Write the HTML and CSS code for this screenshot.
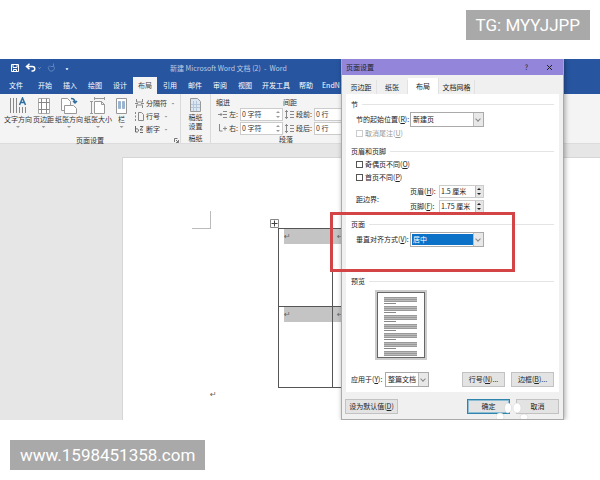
FILE: index.html
```
<!DOCTYPE html>
<html lang="zh-CN">
<head>
    <meta charset="utf-8">
    <title>页面设置</title>
    <link rel="stylesheet" href="styles.css">
</head>
<body>
<div class="top-bar"><span class="badge">TG: MYYJJPP</span></div>

<div class="app">
    <div class="title-bar">
        <svg class="quick" width="60" height="10" viewBox="0 0 60 10" fill="none" stroke="#fff">
            <path d="M1.5 1.5h7v7h-7z M3 1.5v3h4v-3 M3.5 8.500v-2h3v2"/>
            <path d="M17 3.500h5.500c3 0 3 4.500 0 4.500h-1 M19.500 0.800l-3 2.700 3 2.700" stroke-width="1.500"/>
            <path d="M28.500 4.500l1 1 1-1" stroke="#8aa6d2"/>
            <path d="M40 2.500a3 3 0 1 0 3.500 .5 M43.500 .500v3h-3" stroke="#5f83bd"/>
            <path d="M56 5.500l1 1.500 1-1.500z" stroke="#c6d4ea"/>
        </svg>
        <div class="doc-name">新建 Microsoft Word 文档 (2)&nbsp; -&nbsp; Word</div>
    </div>
    <nav class="menu">
        <a href="#" class="file">文件</a>
        <a href="#">开始</a>
        <a href="#">插入</a>
        <a href="#">绘图</a>
        <a href="#">设计</a>
        <a href="#" class="active">布局</a>
        <a href="#">引用</a>
        <a href="#">邮件</a>
        <a href="#">审阅</a>
        <a href="#">视图</a>
        <a href="#" class="tight">开发工具</a>
        <a href="#" class="tight">帮助</a>
        <a href="#" class="tight">EndN</a>
    </nav>

    <div class="ribbon">
        <div class="group setup">
            <div class="group-body">
                <button class="big">
                    <svg width="18" height="18" viewBox="0 0 18 18" fill="none" stroke="#888"><path d="M1.500 1v15M4.500 1v15M7.500 1v15M10.500 10v6M13.500 10v6M16.500 10v6"/><path d="M10.500 8l3-7 3 7M11.500 5.500h4" stroke="#2f6e9e" stroke-width="1.500"/></svg>
                    文字方向<i class="down"></i>
                </button>
                <button class="big">
                    <svg width="14" height="18" viewBox="0 0 14 18" fill="#fff" stroke="#aaa"><path d="M1.500 1.500h11v15h-11z"/><path d="M4.500 1.500v15M9.500 1.500v15M1.500 5.500h11M1.500 12.500h11" stroke="#888"/></svg>
                    页边距<i class="down"></i>
                </button>
                <button class="big">
                    <svg width="18" height="18" viewBox="0 0 18 18" fill="#fff" stroke="#999"><path d="M1.500 1.500h6l3 3v9h-9z"/><path d="M4.500 8.500h9l3 3v5h-12z"/><path d="M11 1.500c3 0 4 1 4 4M13 4l2 2 2-2" fill="none" stroke="#2f6e9e" stroke-width="1.500"/></svg>
                    纸张方向<i class="down"></i>
                </button>
                <button class="big">
                    <svg width="16" height="18" viewBox="0 0 16 18" fill="#fff" stroke="#999"><path d="M4.500 4.500h7l3 3v9h-10zM11.500 4.500v3h3"/><path d="M4.500 1.500h10M4.500 0v3M14.500 0v3M1.500 4.500v12M0 4.500h3M0 16.500h3" stroke="#999"/></svg>
                    纸张大小<i class="down"></i>
                </button>
                <button class="big column">
                    <svg width="13" height="18" viewBox="0 0 13 18" fill="#fff" stroke="#999"><path d="M1.500 1.500h10v15h-10z"/><path d="M3.500 4.500h2v7h-2zM7.500 4.500h2v7h-2z" fill="#9ab5cf" stroke="#9ab5cf"/></svg>
                    栏<i class="down"></i>
                </button>
                <div class="small-list">
                    <button class="small"><svg width="9" height="9" viewBox="0 0 9 9" fill="none" stroke="#888"><path d="M1.500 0v3h6v-3M1.500 9v-3h6v3M0 4.500h3M6 4.500h3"/></svg>分隔符<i class="down"></i></button>
                    <button class="small"><svg width="9" height="9" viewBox="0 0 9 9" fill="none" stroke="#888"><path d="M3.500 .500h3l2 2v6h-5zM.500 0v2M.500 3.500v2M.500 7v2"/></svg>行号<i class="down"></i></button>
                    <button class="small"><svg width="9" height="9" viewBox="0 0 9 9" fill="none" stroke="#666"><path d="M.500 1v6h2c2-1 1-4-2-3M5 1.500h3l-3 3.500h3M5 7.500h3"/></svg>断字<i class="down"></i></button>
                </div>
            </div>
            <div class="group-name">页面设置
                <svg class="launcher" width="5" height="5" viewBox="0 0 5 5" fill="none" stroke="#777"><path d="M.500 4v-3.500h3M2 2l2.500 2.500M4.500 2v2.500h-2.500"/></svg>
            </div>
        </div>
        <div class="group paper">
            <div class="group-body">
                <button class="big two-line">
                    <svg width="13" height="15" viewBox="0 0 13 15"><path d="M1.500 1.500h7l3 3v10h-10z" fill="#dbe6f2" stroke="#999"/><path d="M4.500 4v10M7.500 4v10M2 7.500h9M2 10.500h9" stroke="#b3c6da"/></svg>
                    稿纸<br>设置
                </button>
            </div>
            <div class="group-name">稿纸</div>
        </div>
        <div class="group para">
            <div class="group-body para-grid">
                <div class="col-title">缩进</div>
                <div class="col-title">间距</div>
                <div class="field">
                    <svg width="9" height="9" viewBox="0 0 9 9" fill="none" stroke="#888"><path d="M0 4.500h4M2.500 3l1.500 1.500-1.500 1.500M5 1.500h4M5 4.500h4M5 7.500h4"/></svg>
                    <label for="left">左:</label>
                    <span class="number"><input id="left" value="0 字符"><i class="ticks"></i></span>
                </div>
                <div class="field">
                    <svg width="9" height="9" viewBox="0 0 9 9" fill="none" stroke="#888"><path d="M1.500 0v9M0 2l1.500-1.500 1.500 1.500M0 7l1.500 1.500 1.500-1.500M5 1.500h4M5 4.500h4M5 7.500h4"/></svg>
                    <label for="before">段前:</label>
                    <span class="number"><input id="before" value="0 行"><i class="ticks"></i></span>
                </div>
                <div class="field">
                    <svg width="9" height="9" viewBox="0 0 9 9" fill="none" stroke="#888"><path d="M1.500 0v7h3M5 4.500h4M7 2.500v4"/></svg>
                    <label for="right">右:</label>
                    <span class="number"><input id="right" value="0 字符"><i class="ticks"></i></span>
                </div>
                <div class="field">
                    <svg width="9" height="9" viewBox="0 0 9 9" fill="none" stroke="#888"><path d="M1.500 0v9M0 2l1.500-1.500 1.500 1.500M0 7l1.500 1.500 1.500-1.500M5 1.500h4M5 4.500h4M5 7.500h4"/></svg>
                    <label for="after">段后:</label>
                    <span class="number"><input id="after" value="0 行"><i class="ticks"></i></span>
                </div>
            </div>
            <div class="group-name">段落</div>
        </div>
    </div>

    <div class="workspace">
        <div class="paper-sheet">
            <div class="sheet-row">
                <div class="corner"></div>
                <svg class="handle" width="9" height="9" viewBox="0 0 9 9" fill="#fff" stroke="#888"><path d="M.500 .500h8v8h-8z"/><path d="M4.500 1.500v6M1.500 4.500h6" stroke="#444"/></svg>
                <table class="doc-table">
                    <tr><td><div class="mark">↵</div></td><td><div class="mark">↵</div></td></tr>
                    <tr><td><div class="mark">↵</div></td><td><div class="mark">↵</div></td></tr>
                </table>
            </div>
            <div class="end-mark">↵</div>
        </div>
    </div>

    <div class="dialog">
        <div class="dialog-title">
            <span>页面设置</span>
            <button class="title-btn">?</button>
            <button class="title-btn"><svg width="7" height="7" viewBox="0 0 7 7" stroke="#222"><path d="M1 1l5 5M6 1l-5 5"/></svg></button>
        </div>
        <div class="tabs">
            <button>页边距</button>
            <button>纸张</button>
            <button class="active">布局</button>
            <button class="wide">文档网格</button>
        </div>
        <div class="panel">
            <section class="part first">
                <div class="legend">节</div>
                <div class="line indent">
                    <label class="name" for="start">节的起始位置(<u>R</u>):</label>
                    <span class="combo"><select id="start"><option>新建页</option></select></span>
                </div>
                <label class="check off"><input type="checkbox" disabled>取消尾注(<u>U</u>)</label>
            </section>
            <section class="part second">
                <div class="legend">页眉和页脚</div>
                <label class="check"><input type="checkbox">奇偶页不同(<u>O</u>)</label>
                <label class="check"><input type="checkbox">首页不同(<u>P</u>)</label>
                <div class="line indent">
                    <span class="edge">距边界:</span>
                    <div class="edge-fields">
                        <div class="line"><label for="head">页眉(<u>H</u>):</label><span class="spin"><input id="head" value="1.5 厘米"><i class="up-down"></i></span></div>
                        <div class="line"><label for="foot">页脚(<u>F</u>):</label><span class="spin"><input id="foot" value="1.75 厘米"><i class="up-down"></i></span></div>
                    </div>
                </div>
            </section>
            <section class="part third">
                <div class="legend">页面</div>
                <div class="line indent">
                    <label class="name" for="align">垂直对齐方式(<u>V</u>):</label>
                    <span class="combo picked"><select id="align"><option>居中</option></select></span>
                </div>
            </section>
            <section class="part">
                <div class="legend">预览</div>
                <div class="preview">
                    <p></p><p></p><p></p><p></p><p></p><p></p><p class="last"></p>
                </div>
                <div class="line apply">
                    <label for="scope">应用于(<u>Y</u>):</label>
                    <span class="combo short"><select id="scope"><option>整篇文档</option></select></span>
                    <button class="btn push">行号(<u>N</u>)...</button>
                    <button class="btn">边框(<u>B</u>)...</button>
                </div>
            </section>
        </div>
        <div class="dialog-footer">
            <button class="btn default">设为默认值(<u>D</u>)</button>
            <button class="btn ok push">确定</button>
            <button class="btn">取消</button>
        </div>
        <svg class="paw" width="34" height="17" viewBox="0 0 34 17" fill="#fff" stroke="#ccc" stroke-width=".5"><ellipse cx="12" cy="6" rx="3.500" ry="5"/><ellipse cx="21" cy="6" rx="4" ry="5"/><ellipse cx="4" cy="15" rx="4" ry="4"/><ellipse cx="28" cy="15" rx="4" ry="3"/></svg>
    </div>
    <div class="highlight"></div>
</div>

<div class="bottom-bar"><span class="badge">www.1598451358.com</span></div>
</body>
</html>
```
FILE: styles.css
```
* {
    box-sizing: border-box;
}
body {
    margin: 0;
    background: #fff;
    color: #333;
    font-family: "Noto Sans CJK SC", "Liberation Sans", sans-serif;
    font-size: 7px;
    line-height: 9px;
}
button, input, select {
    font: inherit;
    color: inherit;
    margin: 0;
    padding: 0;
    border: 0;
    background: none;
    border-radius: 0;
    outline: 0;
}
i {
    display: block;
    flex: none;
}
svg {
    display: block;
    flex: none;
}

/* badges above and below the window */
.top-bar, .bottom-bar {
    display: flex;
    padding: 10px;
}
.top-bar {
    justify-content: flex-end;
    padding-bottom: 19px;
}
.bottom-bar {
    padding-top: 20px;
}
.badge {
    padding: 0 10px;
    background: #a9a9a9;
    color: #fff;
    font-family: Roboto, "Liberation Sans", sans-serif;
    font-size: 17px;
    line-height: 30px;
}

/* word window */
.app {
    position: relative;
    overflow: hidden;
}
.title-bar {
    display: flex;
    align-items: center;
    height: 18px;
    padding-left: 10px;
    background: #27559f;
}
.doc-name {
    margin-left: 100px;
    color: #bccce6;
    white-space: nowrap;
}
.menu {
    display: flex;
    gap: 1px;
    height: 17px;
    padding-left: 4px;
    background: #27559f;
}
.menu a {
    padding: 0 5px;
    color: #fff;
    line-height: 17px;
    text-decoration: none;
    white-space: nowrap;
}
.menu .file {
    margin-right: 4px;
}
.menu .active {
    background: #f4f4f4;
    color: #444;
}
.menu .tight {
    padding: 0 4px;
}
.ribbon {
    display: flex;
    height: 50px;
    background: #f4f4f4;
    border-bottom: 1px solid #dcdcdc;
}
.group {
    display: flex;
    flex-direction: column;
    justify-content: space-between;
    padding: 3px 4px 0;
    border-right: 1px solid #dadada;
}
.group.setup {
    width: 181px;
}
.group.paper {
    width: 30px;
}
.group.para {
    border: 0;
}
.group-body {
    display: flex;
    gap: 1px;
}
.group-name {
    display: flex;
    justify-content: center;
    align-items: center;
    line-height: 9px;
}
.launcher {
    margin-left: 70px;
    margin-right: -75px;
}
.big {
    display: flex;
    flex-direction: column;
    align-items: center;
    white-space: nowrap;
}
.big .down {
    margin-top: 2px;
}
.big.column {
    width: 17px;
}
.big.two-line {
    display: block;
    width: 100%;
    text-align: center;
}
.big.two-line svg {
    margin: 0 auto 1px;
}
.down {
    width: 4px;
    height: 2px;
    background: #999;
    clip-path: polygon(0 0, 100% 0, 50% 100%);
}
.small {
    display: flex;
    align-items: center;
    gap: 2px;
    height: 13px;
}
.small .down {
    margin-left: 2px;
}
.small-list {
    margin-left: 4px;
}
.para-grid {
    display: grid;
    grid-template-columns: 67px auto;
    column-gap: 0;
    padding-left: 1px;
}
.col-title {
    line-height: 10px;
}
.field {
    display: flex;
    align-items: center;
    height: 13px;
    gap: 2px;
    padding-left: 2px;
    white-space: nowrap;
}
.number {
    display: flex;
    align-items: center;
    width: 43px;
    height: 13px;
    margin-left: auto;
    background: #fff;
    border: 1px solid #ccc;
}
.number input {
    width: 30px;
    flex: 1;
    padding-left: 1px;
}
.ticks {
    width: 4px;
    height: 7px;
    margin-right: 2px;
    background: #999;
    clip-path: polygon(0 2px, 50% 0, 100% 2px, 0 2px, 0 5px, 100% 5px, 50% 100%, 0 5px);
}

/* document */
.workspace {
    padding: 13px 0 0 122px;
    background: #e6e6e6;
}
.paper-sheet {
    height: 263px;
    padding-top: 53px;
    background: #fff;
    border-left: 1px solid #d6d6d6;
    border-top: 1px solid #d6d6d6;
}
.sheet-row {
    display: flex;
    align-items: flex-start;
}
.corner {
    width: 19px;
    height: 18px;
    margin-left: 69px;
    border-right: 1px solid #bbb;
    border-bottom: 1px solid #bbb;
}
.handle {
    margin: 8px 0 0 59px;
}
.doc-table {
    margin: 17px 0 0 -1px;
    border-collapse: collapse;
}
.doc-table td {
    width: 54px;
    height: 78px;
    padding: 0;
    vertical-align: top;
    border: 1px solid #555;
}
.doc-table td:first-child {
    padding-left: 5px;
}
.doc-table tr:last-child td {
    height: 81px;
}
.mark {
    height: 15px;
    background: #c4c4c4;
    line-height: 15px;
}
.doc-table td + td .mark {
    padding-left: 4px;
}
.mark, .end-mark {
    color: #666;
    font-family: "DejaVu Sans", sans-serif;
    font-size: 8px;
}
.end-mark {
    margin: 2px 0 0 87px;
}

/* page setup dialog */
.dialog {
    position: absolute;
    top: 0;
    left: 341px;
    width: 223px;
    background: #f0f0f0;
    border: 1px solid #aaa;
    border-top: 0;
    box-shadow: 1px 0 5px rgba(0, 0, 0, 0.35);
    color: #222;
}
.dialog-title {
    display: flex;
    align-items: center;
    height: 16px;
    padding: 0 10px 0 4px;
    background: #9385d9;
}
.dialog-title span {
    flex: 1;
}
.title-btn {
    margin-left: 18px;
}
.tabs {
    display: flex;
    align-items: flex-end;
    height: 19px;
    padding-left: 4px;
}
.tabs button {
    width: 31px;
    height: 14px;
    border-right: 1px solid #e2e2e2;
    white-space: nowrap;
}
.tabs .wide {
    width: 36px;
}
.tabs .active {
    height: 16px;
    background: #fff;
}
.panel {
    margin: 0 4px;
    height: 298px;
    padding: 4px 5px;
    background: #fff;
}
.first {
    height: 47px;
}
.second {
    height: 73px;
}
.third {
    height: 57px;
}
.legend {
    display: flex;
    align-items: center;
    gap: 4px;
    height: 13px;
}
.legend:after {
    content: '';
    flex: 1;
    border-top: 1px solid #e4e4e4;
}
.line {
    display: flex;
    align-items: center;
    white-space: nowrap;
}
.indent {
    padding-left: 5px;
    margin-top: 1px;
}
.name {
    width: 54px;
}
.combo {
    display: flex;
    position: relative;
    width: 74px;
    height: 15px;
    border: 1px solid #aaa;
    background: #fff;
}
.combo select {
    appearance: none;
    flex: 1;
    padding-left: 1px;
    margin: 1px 10px 1px 1px;
}
.combo.picked select {
    background: #0c72c8;
    color: #fff;
}
.combo:before {
    content: '';
    position: absolute;
    top: 0;
    right: 0;
    bottom: 0;
    width: 9px;
    background: #e8e8e8;
    border-left: 1px solid #bbb;
}
.combo:after {
    content: '';
    position: absolute;
    top: 4px;
    right: 3px;
    width: 3px;
    height: 3px;
    border-right: 1px solid #888;
    border-bottom: 1px solid #888;
    transform: rotate(45deg);
}
.combo.short {
    width: 44px;
    margin-left: 5px;
}
.check {
    display: flex;
    align-items: center;
    height: 13px;
    padding-left: 5px;
}
.check input {
    appearance: none;
    width: 7px;
    height: 7px;
    margin-right: 2px;
    border: 1px solid #555;
    background: #fff;
}
.off {
    color: #999;
}
.off input {
    border-color: #ccc;
}
.edge-fields {
    display: grid;
    gap: 2px;
    margin-left: auto;
    padding-right: 70px;
}
.edge-fields label {
    width: 29px;
}
.spin {
    display: flex;
    width: 45px;
    height: 13px;
    border: 1px solid #ccc;
    background: #fff;
}
.spin input {
    width: 20px;
    flex: 1;
    padding-left: 1px;
}
.up-down {
    position: relative;
    width: 8px;
    background: #e6e6e6;
    border-left: 1px solid #bbb;
}
.up-down:before, .up-down:after {
    content: '';
    position: absolute;
    left: 1px;
    width: 4px;
    height: 2px;
    background: #222;
}
.up-down:before {
    top: 2px;
    clip-path: polygon(50% 0, 100% 100%, 0 100%);
}
.up-down:after {
    bottom: 2px;
    clip-path: polygon(0 0, 100% 0, 50% 100%);
}
.preview {
    width: 52px;
    height: 70px;
    margin: 2px 0 0 24px;
    padding: 5px 8px 0 7px;
    border: 2px solid #ccc;
    outline: 1px solid #666;
    outline-offset: -3px;
}
.preview p {
    height: 7px;
    margin: 0 0 2px;
    background: linear-gradient(#888, #888) 0 6px / 12px 1px no-repeat, repeating-linear-gradient(#999 0 1px, #bbb 1px 2px) 0 0 / 100% 5px no-repeat;
}
.preview .last {
    height: 5px;
}
.apply {
    margin-top: 12px;
}
.apply label {
    width: 29px;
}
.btn {
    width: 43px;
    height: 15px;
    background: #e3e3e3;
    border: 1px solid #c2c2c2;
    white-space: nowrap;
}
.btn + .btn {
    margin-left: 6px;
}
.btn.push {
    margin-left: auto;
}
.dialog-footer {
    display: flex;
    height: 27px;
    padding: 7px 4px 0 3px;
}
.btn.default {
    width: 53px;
}
.btn.ok {
    border: 1px solid #2f83ad;
    outline: 1px solid #8bbdd5;
    outline-offset: -2px;
}
.paw {
    position: absolute;
    right: 33px;
    bottom: 0;
}
.highlight {
    position: absolute;
    top: 153px;
    left: 330px;
    width: 185px;
    height: 60px;
    border: 3px solid #d34447;
}
```
